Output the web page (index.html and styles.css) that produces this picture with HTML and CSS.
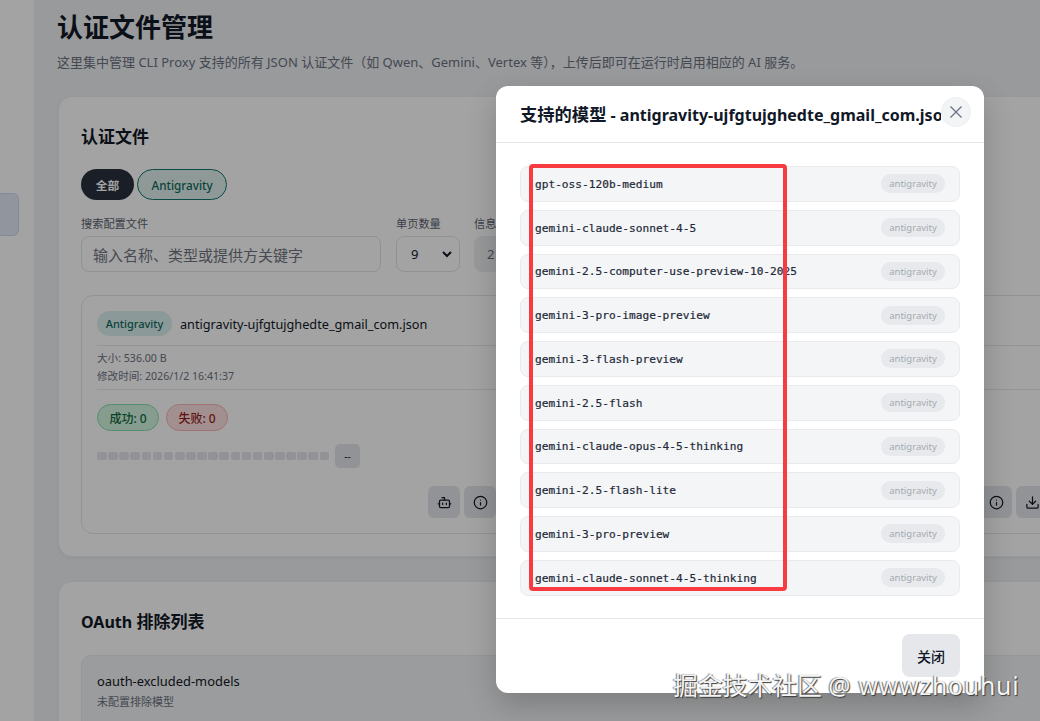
FILE: index.html
```html
<!DOCTYPE html>
<html lang="zh">
<head>
<meta charset="utf-8">
<title>认证文件管理</title>
<link rel="stylesheet" href="styles.css">
</head>
<body>
<div class="layout">
  <aside class="sidebar"><div class="nav-active"></div></aside>
  <main class="main">
    <h1 class="page-title">认证文件管理</h1>
    <p class="page-sub">这里集中管理 CLI Proxy 支持的所有 JSON 认证文件（如 Qwen、Gemini、Vertex 等），上传后即可在运行时启用相应的 AI 服务。</p>

    <section class="card">
      <h2 class="card-title">认证文件</h2>
      <div class="filters">
        <span class="pill pill-dark">全部</span>
        <span class="pill pill-teal">Antigravity</span>
      </div>
      <div class="controls">
        <div class="field field-search"><label class="label">搜索配置文件</label><div class="input placeholder">输入名称、类型或提供方关键字</div></div>
        <div class="field field-select"><label class="label">单页数量</label><div class="input select"><span>9</span><svg class="chev" viewBox="0 0 12 12"><path d="M2 4l4 4 4-4" fill="none" stroke="#111827" stroke-width="2"/></svg></div></div>
        <div class="field field-info"><label class="label">信息</label><div class="input disabled">2</div></div>
      </div>
      <div class="grid">
        <article class="file">
          <div class="file-head"><span class="badge">Antigravity</span><span class="file-name">antigravity-ujfgtujghedte_gmail_com.json</span></div>
          <div class="meta"><div>大小: 536.00 B</div><div>修改时间: 2026/1/2 16:41:37</div></div>
          <div class="stats"><span class="stat stat-ok">成功: 0</span><span class="stat stat-bad">失败: 0</span></div>
          <div class="status"><div class="bars"><i></i><i></i><i></i><i></i><i></i><i></i><i></i><i></i><i></i><i></i><i></i><i></i><i></i><i></i><i></i><i></i><i></i><i></i><i></i><i></i><i></i></div><span class="rate">--</span></div>
          <div class="actions">
            <span class="act"><svg viewBox="0 0 24 24"><path d="M12 8V4H8"/><rect x="4" y="8" width="16" height="12" rx="2"/><path d="M2 14h2M20 14h2M15 13v2M9 13v2"/></svg></span>
            <span class="act"><svg viewBox="0 0 24 24"><circle cx="12" cy="12" r="10"/><path d="M12 16v-4M12 8h.01"/></svg></span>
            <span class="act"><svg viewBox="0 0 24 24"><path d="M21 15v4a2 2 0 0 1-2 2H5a2 2 0 0 1-2-2v-4M7 10l5 5 5-5M12 15V3"/></svg></span>
            <span class="act"></span>
          </div>
        </article>
        <article class="file">
          <div class="file-head"></div>
          <div class="meta"><div class="meta-line"></div><div class="meta-line"></div></div>
          <div class="stats"><span class="stat"></span></div>
          <div class="status"><span class="rate"></span></div>
          <div class="actions">
            <span class="act"><svg viewBox="0 0 24 24"><path d="M12 8V4H8"/><rect x="4" y="8" width="16" height="12" rx="2"/><path d="M2 14h2M20 14h2M15 13v2M9 13v2"/></svg></span>
            <span class="act"><svg viewBox="0 0 24 24"><circle cx="12" cy="12" r="10"/><path d="M12 16v-4M12 8h.01"/></svg></span>
            <span class="act"><svg viewBox="0 0 24 24"><path d="M21 15v4a2 2 0 0 1-2 2H5a2 2 0 0 1-2-2v-4M7 10l5 5 5-5M12 15V3"/></svg></span>
            <span class="act"></span>
          </div>
        </article>
      </div>
    </section>

    <section class="card card-oauth">
      <h2 class="card-title"><span class="title-latin">OAuth</span> 排除列表</h2>
      <div class="oauth-box">
        <div class="oauth-name">oauth-excluded-models</div>
        <div class="oauth-note">未配置排除模型</div>
      </div>
    </section>
  </main>
</div>

<div class="overlay"></div>

<div class="modal">
  <header class="modal-head">
    <h3 class="modal-title"><span class="modal-title-cjk">支持的模型</span> - antigravity-ujfgtujghedte_gmail_com.json</h3>
    <button class="close"><svg viewBox="0 0 14 14"><path d="M1.5 1.5l11 11M12.5 1.5l-11 11" fill="none" stroke="#6b7280" stroke-width="1.3"/></svg></button>
  </header>
  <div class="modal-body">
    <div class="model"><span class="model-name">gpt-oss-120b-medium</span><span class="tag">antigravity</span></div>
    <div class="model"><span class="model-name">gemini-claude-sonnet-4-5</span><span class="tag">antigravity</span></div>
    <div class="model"><span class="model-name">gemini-2.5-computer-use-preview-10-2025</span><span class="tag">antigravity</span></div>
    <div class="model"><span class="model-name">gemini-3-pro-image-preview</span><span class="tag">antigravity</span></div>
    <div class="model"><span class="model-name">gemini-3-flash-preview</span><span class="tag">antigravity</span></div>
    <div class="model"><span class="model-name">gemini-2.5-flash</span><span class="tag">antigravity</span></div>
    <div class="model"><span class="model-name">gemini-claude-opus-4-5-thinking</span><span class="tag">antigravity</span></div>
    <div class="model"><span class="model-name">gemini-2.5-flash-lite</span><span class="tag">antigravity</span></div>
    <div class="model"><span class="model-name">gemini-3-pro-preview</span><span class="tag">antigravity</span></div>
    <div class="model"><span class="model-name">gemini-claude-sonnet-4-5-thinking</span><span class="tag">antigravity</span></div>
  </div>
  <footer class="modal-foot"><button class="btn-close">关闭</button></footer>
</div>

<div class="redbox"></div>
<div class="watermark">掘金技术社区 <span class="watermark-latin">@ wwwzhouhui</span></div>
</body>
</html>
```

FILE: styles.css
```css
* { box-sizing: border-box; }
html, body { margin: 0; height: 100%; overflow: hidden; }
body {
  width: 1040px;
  height: 721px;
  position: relative;
  background: #f3f5f8;
  color: #111827;
  font-family: "Noto Sans", "Noto Sans CJK SC", sans-serif;
}
.layout { display: flex; width: 1200px; height: 721px; }
.sidebar {
  width: 35px;
  flex: none;
  background: #ffffff;
  padding-top: 193px;
  border-right: 1px solid #eef0f3;
}
.nav-active {
  width: 19px;
  height: 43px;
  background: #e3eaf8;
  border: 1px solid #cdd8ee;
  border-left: 0;
  border-radius: 0 6px 6px 0;
}
.main { flex: none; width: 1110px; padding: 9px 0 0 22px; background: #eff1f4; }
.page-title { margin: 0; font-size: 26px; line-height: 36px; font-weight: 700; color: #111827; }
.page-sub { margin: 8px 0 0; font-size: 13px; line-height: 18px; color: #6b7280; white-space: nowrap; }
.card {
  width: 1066px;
  margin: 25px 0 0 1px;
  padding: 27px 22px 22px;
  height: 461px;
  background: #fff;
  border: 1px solid #eceef1;
  border-radius: 14px;
  box-shadow: 0 1px 3px rgba(0,0,0,.05);
}
.card-oauth { margin-top: 24px; height: 200px; padding-top: 27px; }
.card-title { margin: 0; font-size: 17px; line-height: 26px; font-weight: 700; color: #111827; }
.title-latin { font-size: 16px; }
.filters { display: flex; gap: 3px; margin-top: 19px; }
.pill {
  height: 31px;
  display: inline-flex;
  align-items: center;
  padding: 0 13.5px;
  border-radius: 16px;
  font-size: 11.7px;
  font-weight: 500;
}
.pill-dark { background: #29303d; color: #fff; width: 53px; justify-content: center; padding: 0; font-weight: 700; }
.pill-teal { background: #dff0ee; color: #0f6b5c; border: 1px solid #14766a; }
.controls { display: flex; margin-top: 16px; }
.field { display: flex; flex-direction: column; }
.label { font-size: 11.2px; line-height: 16px; color: #5b6370; white-space: nowrap; }
.input {
  margin-top: 4px;
  height: 36px;
  border: 1px solid #e1e3e7;
  border-radius: 8px;
  display: flex;
  align-items: center;
  background: #fff;
  font-size: 14px;
  color: #111827;
}
.field-search { width: 300px; }
.field-select { width: 64px; margin-left: 15px; }
.field-info { width: 70px; margin-left: 14px; }
.placeholder { padding-left: 11px; font-size: 15px; color: #6f7580; }
.select { padding: 0 6px 0 14px; justify-content: space-between; font-size: 13px; }
.chev { width: 12px; height: 12px; }
.disabled { background: #eef0f2; color: #6b7280; padding-left: 12px; font-size: 13px; border-color: #eef0f2; }
.grid { display: grid; grid-template-columns: 503px 503px; gap: 13px; margin-top: 23px; }
.file {
  height: 239px;
  border: 1px solid #e5e7eb;
  border-radius: 12px;
  padding: 15px 15px 0;
  display: flex;
  flex-direction: column;
  background: #fff;
}
.file-head {
  display: flex;
  align-items: center;
  gap: 8px;
  padding-bottom: 9px;
  border-bottom: 1px solid #e8eaed;
  box-sizing: content-box;
  height: 25px;
}
.badge {
  height: 25px;
  width: 75px;
  display: flex;
  align-items: center;
  justify-content: center;
  border-radius: 13px;
  background: #daf0ee;
  color: #0f6b5c;
  font-size: 11px;
  font-weight: 500;
  flex: none;
}
.file-name { font-size: 12.7px; color: #111827; white-space: nowrap; }
.meta {
  padding: 3px 0 4px;
  font-size: 10.6px;
  line-height: 18px;
  color: #6b7280;
  border-bottom: 1px solid #e8eaed;
}
.meta-line { height: 18px; }
.stats { display: flex; gap: 7px; margin-top: 14px; }
.stat {
  width: 62px;
  height: 27px;
  display: flex;
  align-items: center;
  justify-content: center;
  border-radius: 14px;
  font-size: 12px;
  font-weight: 500;
}
.stat-ok { background: #d1f4e0; color: #126a3e; border: 1px solid #86dcb0; }
.stat-bad { background: #fde2e2; color: #991b1b; border: 1px solid #f9b1b1; }
.status { display: flex; align-items: center; gap: 6px; margin-top: 13px; }
.bars { display: flex; gap: 1.5px; width: 232px; }
.bars i { flex: 1; height: 8px; border-radius: 2px; background: #e5e7eb; }
.rate {
  width: 25px;
  height: 24px;
  border-radius: 5px;
  background: #e5e7eb;
  color: #111827;
  font-size: 10px;
  display: flex;
  align-items: center;
  justify-content: center;
}
.actions { display: flex; justify-content: flex-end; gap: 4px; margin-top: 18px; }
.act {
  width: 32px;
  height: 32px;
  border-radius: 6px;
  background: #e5e7eb;
  display: flex;
  align-items: center;
  justify-content: center;
}
.act svg { width: 15px; height: 15px; fill: none; stroke: #111827; stroke-width: 2; stroke-linecap: round; stroke-linejoin: round; }
.oauth-box {
  margin-top: 20px;
  height: 140px;
  background: #f3f4f6;
  border-radius: 10px;
  border: 1px solid #e9ebee;
  padding: 16px 15px;
}
.oauth-name { font-size: 12.9px; line-height: 18px; color: #111827; }
.oauth-note { font-size: 11px; line-height: 18px; margin-top: 3px; color: #6b7280; }

.overlay { position: absolute; inset: 0; background: rgba(0,0,0,.36); }
.modal {
  position: absolute;
  left: 496px;
  top: 86px;
  width: 488px;
  height: 607px;
  background: #fff;
  border-radius: 12px;
  box-shadow: 0 12px 30px rgba(0,0,0,.2);
  display: flex;
  flex-direction: column;
  overflow: hidden;
}
.modal-head {
  height: 57px;
  flex: none;
  display: flex;
  align-items: center;
  padding: 0 13px 2px 24px;
  border-bottom: 1px solid #e5e7eb;
}
.modal-title {
  margin: 1px 0 0;
  flex: 1;
  min-width: 0;
  overflow: hidden;
  white-space: nowrap;
  font-size: 16px;
  font-weight: 700;
  color: #111827;
}
.modal-title-cjk { font-size: 17.3px; }
.close {
  width: 30px;
  height: 30px;
  flex: none;
  padding: 0;
  margin-top: -2px;
  border: 1px solid #eceef0;
  border-radius: 50%;
  background: #f3f4f6;
  display: flex;
  align-items: center;
  justify-content: center;
}
.close svg { width: 14px; height: 14px; }
.modal-body {
  flex: 1;
  display: flex;
  flex-direction: column;
  gap: 8px;
  padding: 23px 24px 0;
}
.model {
  height: 35.75px;
  display: flex;
  align-items: center;
  justify-content: space-between;
  padding: 0 14px;
  background: #f3f5f7;
  border: 1px solid #e8eaed;
  border-radius: 8px;
}
.model-name {
  font-family: "DejaVu Sans Mono", monospace;
  font-size: 11.16px;
  padding-top: 1px;
  color: #1f2937;
  -webkit-text-stroke: .2px #1f2937;
}
.tag {
  width: 64px;
  height: 19px;
  display: flex;
  align-items: center;
  justify-content: center;
  border-radius: 10px;
  background: #e7e9ec;
  color: #a4a9b0;
  font-size: 9.5px;
}
.modal-foot {
  height: 75px;
  flex: none;
  border-top: 1px solid #e5e7eb;
  display: flex;
  justify-content: flex-end;
  padding: 15px 24px 0;
}
.btn-close {
  width: 58px;
  height: 43px;
  border: 0;
  border-radius: 8px;
  background: #e5e7eb;
  color: #111827;
  font-family: inherit;
  font-size: 14px;
  font-weight: 500;
}
.redbox {
  position: absolute;
  left: 529px;
  top: 164px;
  width: 258px;
  height: 427px;
  border: 4px solid #f83b40;
  border-radius: 4px;
}
.watermark {
  position: absolute;
  left: 673px;
  top: 668px;
  font-size: 24.8px;
  line-height: 34px;
  color: #f4f4f4;
  white-space: nowrap;
  text-shadow: 1px 1px 1px #3a3a3a, -1px 0 1px #777;
}
.watermark-latin { letter-spacing: .8px; }
```
